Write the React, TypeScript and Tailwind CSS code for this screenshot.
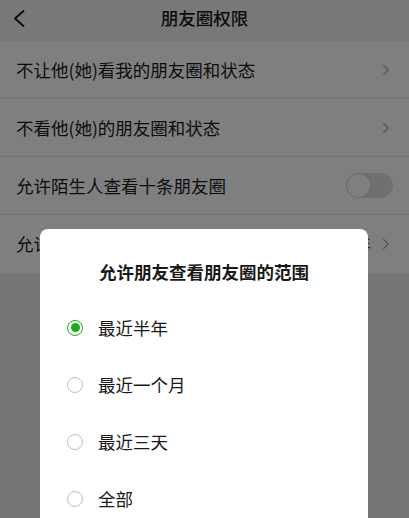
import { ChevronRight } from "lucide-react";

const rows = [
  { label: "不让他(她)看我的朋友圈和状态", kind: "link" },
  { label: "不看他(她)的朋友圈和状态", kind: "link" },
  { label: "允许陌生人查看十条朋友圈", kind: "toggle" },
  { label: "允许朋友查看朋友圈的范围", kind: "value", value: "最近半年" },
];

const options = ["最近半年", "最近一个月", "最近三天", "全部"];

const Radio = ({ checked }: { checked: boolean }) =>
  checked ? (
    <span className="w-4 h-4 rounded-full border-[1.5px] border-[#1aad19] flex items-center justify-center">
      <span className="w-[9px] h-[9px] rounded-full bg-[#1aad19]" />
    </span>
  ) : (
    <span className="w-4 h-4 rounded-full border-[1.5px] border-[#bdbdbd]" />
  );

export default function App() {
  return (
    <div className="relative h-[518px] w-[409px] overflow-hidden bg-[#ededed] font-['Noto_Sans_CJK_SC',sans-serif] text-[#191919]">
      <header className="h-[41px] relative flex items-start justify-center bg-[#f0f0f0]">
        <svg className="absolute left-[13px] top-[10px]" width="12" height="17" viewBox="0 0 12 17" fill="none">
          <polyline points="10.5,1 2,8.5 10.5,16" stroke="#111" strokeWidth="1.8" strokeLinecap="round" strokeLinejoin="round" />
        </svg>
        <h1 className="mt-[7px] text-[17.5px] leading-[22px] font-medium">朋友圈权限</h1>
      </header>

      <ul className="bg-white">
        {rows.map((row, i) => (
          <li
            key={i}
            className={`h-[58px] flex items-center pl-4 pr-[14px] ${i < rows.length - 1 ? "border-b border-[#e8e8e8]" : ""}`}
          >
            <span className="flex-1 text-[17.5px] leading-6 whitespace-nowrap">{row.label}</span>
            {row.kind === "value" && (
              <span className="text-[17.5px] text-[#5a5a5a] mr-[6px]">{row.value}</span>
            )}
            {row.kind === "toggle" ? (
              <span className="w-[47px] h-[25px] rounded-full bg-[#e0e0e0] flex items-center mr-[2px]">
                <span className="w-[25px] h-[25px] rounded-full bg-white border border-[#d6d6d6]" />
              </span>
            ) : (
              <ChevronRight className="h-[18px] w-[18px] text-[#a8a8a8]" strokeWidth={1.6} />
            )}
          </li>
        ))}
      </ul>

      <div className="absolute inset-0 bg-black/50" />

      <div className="absolute left-[40px] top-[229px] w-[328px] h-[320px] bg-white rounded-[8px]">
        <h2 className="pt-[31px] text-center text-[17.5px] leading-6 font-semibold">允许朋友查看朋友圈的范围</h2>
        <ul className="mt-[15px]">
          {options.map((opt, i) => (
            <li key={opt} className="h-[57px] flex items-center pl-[27px] gap-[15px]">
              <Radio checked={i === 0} />
              <span className="text-[17.5px] leading-6">{opt}</span>
            </li>
          ))}
        </ul>
      </div>
    </div>
  );
}
